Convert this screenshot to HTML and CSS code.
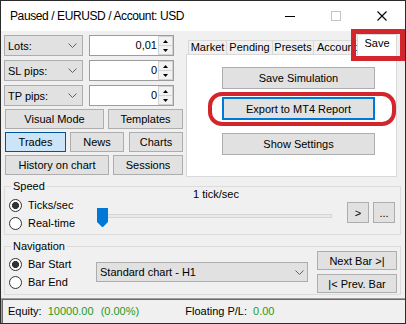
FILE: index.html
```html
<!DOCTYPE html>
<html>
    <head>
        <meta charset="utf-8">
        <title>Simulator</title>
        <link rel="stylesheet" href="styles.css">
    </head>
    <body>
        <div class="window">
            <div class="titlebar">
                <span class="title">Paused / EURUSD / Account: USD</span>
                <div class="controls">
                    <span class="ctl"><svg width="10" height="10"><line x1="0" y1="5.5" x2="10" y2="5.5" stroke="#000"/></svg></span>
                    <span class="ctl"><svg width="10" height="10"><rect x="0.5" y="0.5" width="9" height="9" fill="none" stroke="#c4c4c4"/></svg></span>
                    <span class="ctl"><svg width="10" height="10"><path d="M0.5 0.5 L9.5 9.5 M9.5 0.5 L0.5 9.5" stroke="#000" stroke-width="1.1"/></svg></span>
                </div>
            </div>

            <div class="client">
                <div class="top">
                    <div class="left">
                        <div class="field-row">
                            <div class="combo"><span>Lots:</span><svg class="chev" width="9" height="5"><polyline points="0.5,0.5 4.5,4.5 8.5,0.5" fill="none" stroke="#606060"/></svg></div>
                            <div class="spin"><span class="val">0,01</span><div class="spinner"><span class="half"><svg width="5" height="3"><polygon points="2.5,0 5,3 0,3"/></svg></span><span class="half"><svg width="5" height="3"><polygon points="0,0 5,0 2.5,3"/></svg></span></div></div>
                        </div>
                        <div class="field-row">
                            <div class="combo"><span>SL pips:</span><svg class="chev" width="9" height="5"><polyline points="0.5,0.5 4.5,4.5 8.5,0.5" fill="none" stroke="#606060"/></svg></div>
                            <div class="spin"><span class="val">0</span><div class="spinner"><span class="half"><svg width="5" height="3"><polygon points="2.5,0 5,3 0,3"/></svg></span><span class="half"><svg width="5" height="3"><polygon points="0,0 5,0 2.5,3"/></svg></span></div></div>
                        </div>
                        <div class="field-row">
                            <div class="combo"><span>TP pips:</span><svg class="chev" width="9" height="5"><polyline points="0.5,0.5 4.5,4.5 8.5,0.5" fill="none" stroke="#606060"/></svg></div>
                            <div class="spin"><span class="val">0</span><div class="spinner"><span class="half"><svg width="5" height="3"><polygon points="2.5,0 5,3 0,3"/></svg></span><span class="half"><svg width="5" height="3"><polygon points="0,0 5,0 2.5,3"/></svg></span></div></div>
                        </div>

                        <div class="btn-row first">
                            <button class="btn w-visual">Visual Mode</button>
                            <button class="btn w-templates">Templates</button>
                        </div>
                        <div class="btn-row">
                            <button class="btn w-trades active">Trades</button>
                            <button class="btn w-news">News</button>
                            <button class="btn w-charts">Charts</button>
                        </div>
                        <div class="btn-row">
                            <button class="btn w-history">History on chart</button>
                            <button class="btn w-sessions">Sessions</button>
                        </div>
                    </div>

                    <div class="tabs">
                        <div class="tab-strip">
                            <span class="tab t-market">Market</span>
                            <span class="tab t-pending">Pending</span>
                            <span class="tab t-presets">Presets</span>
                            <span class="tab t-account">Account</span>
                            <span class="tab t-save selected">Save</span>
                        </div>
                        <div class="tab-page">
                            <button class="btn page-btn">Save Simulation</button>
                            <button class="btn page-btn export">Export to MT4 Report</button>
                            <button class="btn page-btn show">Show Settings</button>
                        </div>
                    </div>
                </div>

                <div class="group speed">
                    <span class="group-label">Speed</span>
                    <div class="radios">
                        <label class="radio"><span class="circle checked"></span>Ticks/sec</label>
                        <label class="radio"><span class="circle"></span>Real-time</label>
                    </div>
                    <div class="slider-col">
                        <div class="speed-text">1 tick/sec</div>
                        <div class="slider">
                            <div class="track"></div>
                            <svg class="thumb" width="11" height="19"><polygon points="0,0 11,0 11,14 6,19 5,19 0,14" fill="#0078d7"/></svg>
                        </div>
                    </div>
                    <div class="speed-btns">
                        <button class="btn sq">&gt;</button>
                        <button class="btn sq">...</button>
                    </div>
                </div>

                <div class="group nav">
                    <span class="group-label">Navigation</span>
                    <div class="radios nav-radios">
                        <label class="radio"><span class="circle checked"></span>Bar Start</label>
                        <label class="radio"><span class="circle"></span>Bar End</label>
                    </div>
                    <div class="combo chart-combo"><span>Standard chart - H1</span><svg class="chev" width="9" height="5"><polyline points="0.5,0.5 4.5,4.5 8.5,0.5" fill="none" stroke="#606060"/></svg></div>
                    <div class="nav-btns">
                        <button class="btn bar-btn">Next Bar &gt;|</button>
                        <button class="btn bar-btn">|&lt; Prev. Bar</button>
                    </div>
                </div>
            </div>

            <div class="status">
                <span>Equity:</span>
                <span class="green s-equity">10000.00</span>
                <span class="green s-pct">(0.00%)</span>
                <span class="s-float">Floating P/L:</span>
                <span class="green s-pl">0.00</span>
            </div>

            <div class="mark mark-save"></div>
            <div class="mark mark-export"></div>
        </div>
    </body>
</html>
```

FILE: styles.css
```css
*{
    box-sizing: border-box;
}
body{
    margin: 0; font-family: "Liberation Sans", Arial, sans-serif; font-size: 11px; color: #000;
}
.window{
    position: relative; width: 406px; height: 324px; border: 1px solid #2b2b2b; background: #f0f0f0;
    display: flex; flex-direction: column;
}

/* title bar */
.titlebar{
    flex: none; height: 30px; background: #fff; display: flex; align-items: center;
}
.title{
    padding-left: 9px; font-size: 12px; letter-spacing: -0.4px;
}
.controls{
    margin-left: auto; display: flex;
}
.ctl{
    width: 46px; height: 30px; display: flex; align-items: center; justify-content: center;
}

/* client */
.client{
    flex: none; height: 267px;
}
.top{
    display: flex; height: 146px;
}
.left{
    width: 185px; padding: 4px 0 0 3px;
}
.field-row{
    display: flex; height: 21px;
}
.field-row + .field-row{
    margin-top: 4px;
}
.combo{
    width: 79px; height: 21px; background: #e1e1e1; border: 1px solid #adadad;
    display: flex; align-items: center; padding: 0 5px 0 3px;
}
.chev{
    margin-left: auto;
}
.spin{
    margin-left: 6px; width: 85px; height: 21px; background: #fff; border: 1px solid #9c9c9c; display: flex;
}
.val{
    flex: 1; text-align: right; line-height: 19px; padding-right: 1px;
}
.spinner{
    width: 15px; display: flex; flex-direction: column;
}
.half{
    flex: 1; background: #f2f2f2; border: 1px solid #d2d2d2; display: flex; align-items: center; justify-content: center;
}
.half + .half{
    border-top: none;
}

.btn-row{
    display: flex; gap: 4px; height: 20px; padding-left: 1px; margin-top: 3px;
}
.btn{
    height: 100%; padding: 0; margin: 0; background: #e1e1e1; border: 1px solid #adadad;
    font: inherit; color: #000; white-space: nowrap;
}
.btn.active{
    background: #cce4f7; border-color: #005499;
}
.w-visual{ width: 99px; }
.w-templates{ width: 75px; }
.w-trades{ width: 61px; }
.w-news{ width: 54px; }
.w-charts{ width: 54px; margin-left: 1px; }
.w-history{ width: 104px; }
.w-sessions{ width: 70px; }

/* tabs */
.tabs{
    width: 211px; display: flex; flex-direction: column;
}
.tab-strip{
    flex: none; height: 23px; display: flex; align-items: flex-end; padding-left: 2px;
}
.tab{
    height: 14px; border: 1px solid #d9d9d9; border-bottom: none; margin-right: -1px;
    line-height: 13px; text-align: center; white-space: nowrap; overflow: hidden;
}
.t-market{ width: 39px; }
.t-pending{ width: 47px; }
.t-presets{ width: 42px; }
.t-account{ width: 45px; text-align: left; padding-left: 3px; }
.t-save{ width: 40px; }
.tab.selected{
    height: 21px; margin-bottom: -1px; background: #fff; padding-top: 2px;
    position: relative; z-index: 1;
}
.tab-page{
    flex: 1; background: #fff; border: 1px solid #d9d9d9; padding-left: 35px;
}
.page-btn{
    display: block; width: 153px; height: 22px; margin-top: 12px;
}
.page-btn.export{
    height: 23px; margin-top: 8px; border: 2px solid #0078d7;
}
.page-btn.show{
    margin-top: 13px;
}

/* group boxes */
.group{
    position: relative; margin-left: 3px; width: 397px; height: 49px; border: 1px solid #dcdcdc; display: flex;
}
.speed{
    margin-top: 9px;
}
.nav{
    margin-top: 11px;
}
.group-label{
    position: absolute; top: -7px; left: 6px; padding: 0 2px; background: #f0f0f0; line-height: 13px;
}
.radios{
    width: 92px; padding: 9px 0 0 4px;
}
.nav-radios{
    width: 91px; padding-top: 8px;
}
.radio{
    display: flex; align-items: center; gap: 6px; height: 18px;
}
.circle{
    width: 13px; height: 13px; border: 1px solid #333; border-radius: 50%; background: #fff;
}
.circle.checked{
    background: radial-gradient(circle, #333 0 3.3px, #fff 3.8px);
}
.slider-col{
    width: 238px; padding-top: 1px;
}
.speed-text{
    text-align: center; line-height: 13px;
}
.slider{
    position: relative; height: 19px; margin-top: 7px; padding: 6px 0 0 2px;
}
.track{
    width: 233px; height: 4px; background: #e7eaea; border: 1px solid #d6d6d6;
}
.thumb{
    position: absolute; left: 0; top: 0;
}
.speed-btns{
    margin-left: auto; padding: 15px 5px 0 0; display: flex; gap: 4px;
}
.sq{
    width: 22px; height: 21px;
}
.chart-combo{
    width: 212px; height: 20px; margin-top: 15px; padding: 0 3px;
}
.nav-btns{
    margin-left: auto; padding: 4px 3px 0 0; display: flex; flex-direction: column; gap: 4px;
}
.bar-btn{
    width: 80px; height: 19px;
}

/* status bar */
.status{
    flex: none; height: 25px; border-top: 1px solid #a0a0a0; border-left: 1px solid #a0a0a0;
    box-shadow: inset 1px 1px 0 #696969; padding-left: 6px; line-height: 24px; white-space: nowrap;
}
.green{
    color: #1e9b1e;
}
.s-equity{ margin-left: 3px; }
.s-pct{ margin-left: 4px; }
.s-float{ margin-left: 43px; }
.s-pl{ margin-left: 3px; }

/* annotation marks */
.mark{
    position: absolute; border: 5px solid #d3262c;
}
.mark-save{
    left: 350px; top: 28px; width: 54px; height: 32px;
}
.mark-export{
    left: 207px; top: 91px; width: 188px; height: 34px; border-width: 4px; border-radius: 14px;
}
```
